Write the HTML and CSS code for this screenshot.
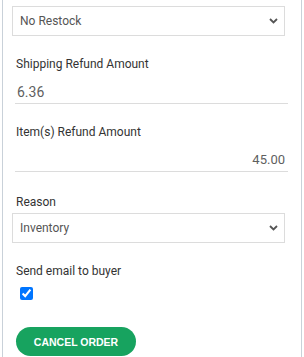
FILE: index.html
```html
<!DOCTYPE html>
<html lang="en">
<head>
    <meta charset="UTF-8">
    <meta name="viewport" content="width=device-width, initial-scale=1.0">
    <title>Cancel Order</title>
    <link rel="stylesheet" href="styles.css">
</head>
<body>
    <div class="panel">
        <form class="cancel-form">
            <div class="select-wrap">
                <select name="restock" class="select">
                    <option>No Restock</option>
                    <option>Restock</option>
                </select>
                <svg class="chevron" width="9" height="6" viewBox="0 0 9 6"><path d="M1 1l3.5 3.5L8 1" fill="none" stroke="#555" stroke-width="1.8"/></svg>
            </div>

            <div class="field">
                <label for="shipping">Shipping Refund Amount</label>
                <input type="text" id="shipping" class="amount" value="6.36">
            </div>

            <div class="field">
                <label for="items">Item(s) Refund Amount</label>
                <input type="text" id="items" class="amount amount-right" value="45.00">
            </div>

            <div class="field field-reason">
                <label for="reason" class="label-tight">Reason</label>
                <div class="select-wrap select-inset">
                    <select id="reason" name="reason" class="select">
                        <option>Inventory</option>
                        <option>Buyer request</option>
                    </select>
                    <svg class="chevron" width="9" height="6" viewBox="0 0 9 6"><path d="M1 1l3.5 3.5L8 1" fill="none" stroke="#555" stroke-width="1.8"/></svg>
                </div>
            </div>

            <div class="field">
                <label for="notify">Send email to buyer</label>
                <input type="checkbox" id="notify" class="check" checked>
            </div>

            <button type="button" class="btn-cancel">CANCEL ORDER</button>
        </form>
    </div>
</body>
</html>
```

FILE: styles.css
```css
body {
    margin: 0;
    padding: 0;
    background-color: #fff;
    font-family: Roboto, "Noto Sans", sans-serif;
}
.panel {
    box-sizing: border-box;
    width: 300px;
    height: 357px;
    margin-left: 2px;
    padding: 6px 16px 0 9px;
    border-left: 1px solid #c9d1d9;
    border-right: 1px solid #c9d1d9;
}
.select-wrap {
    position: relative;
    width: 273px;
}
.select-inset {
    margin-left: -4px;
}
.select {
    display: block;
    box-sizing: border-box;
    width: 273px;
    height: 30px;
    margin: 0;
    padding: 0 24px 0 7px;
    font-family: Roboto, "Noto Sans", sans-serif;
    font-size: 12px;
    color: #555;
    background-color: #fff;
    border: 1px solid #dcdcdc;
    border-radius: 0;
    appearance: none;
    -webkit-appearance: none;
    outline: none;
}
.chevron {
    position: absolute;
    right: 7px;
    top: 12px;
    pointer-events: none;
}
.field {
    margin-top: 20px;
    padding-left: 4px;
}
.field-reason {
    margin-top: 22px;
}
.field label {
    display: block;
    font-size: 12px;
    line-height: 16px;
    color: #333;
    margin-bottom: 8px;
}
.field .label-tight {
    margin-bottom: 3px;
}
.amount {
    display: block;
    box-sizing: border-box;
    width: 273px;
    height: 24px;
    margin: 0 0 0 -1px;
    padding: 0 2px;
    font-family: Roboto, "Noto Sans", sans-serif;
    font-size: 14px;
    color: #5f5f5f;
    border: none;
    border-bottom: 1px solid #dcdcdc;
    outline: none;
    background: transparent;
}
.amount-right {
    padding-right: 3px;
    font-size: 13px;
    text-align: right;
}
.check {
    display: block;
    margin: 4px 0 0 4px;
    width: 13px;
    height: 13px;
}
.btn-cancel {
    display: block;
    margin: 27px 0 0 4px;
    width: 120px;
    height: 29px;
    padding: 0;
    font-family: "Liberation Sans", Arial, sans-serif;
    font-weight: bold;
    font-size: 10.5px;
    color: #fff;
    background-color: #17a35f;
    border: none;
    border-radius: 15px;
    cursor: pointer;
}
```
